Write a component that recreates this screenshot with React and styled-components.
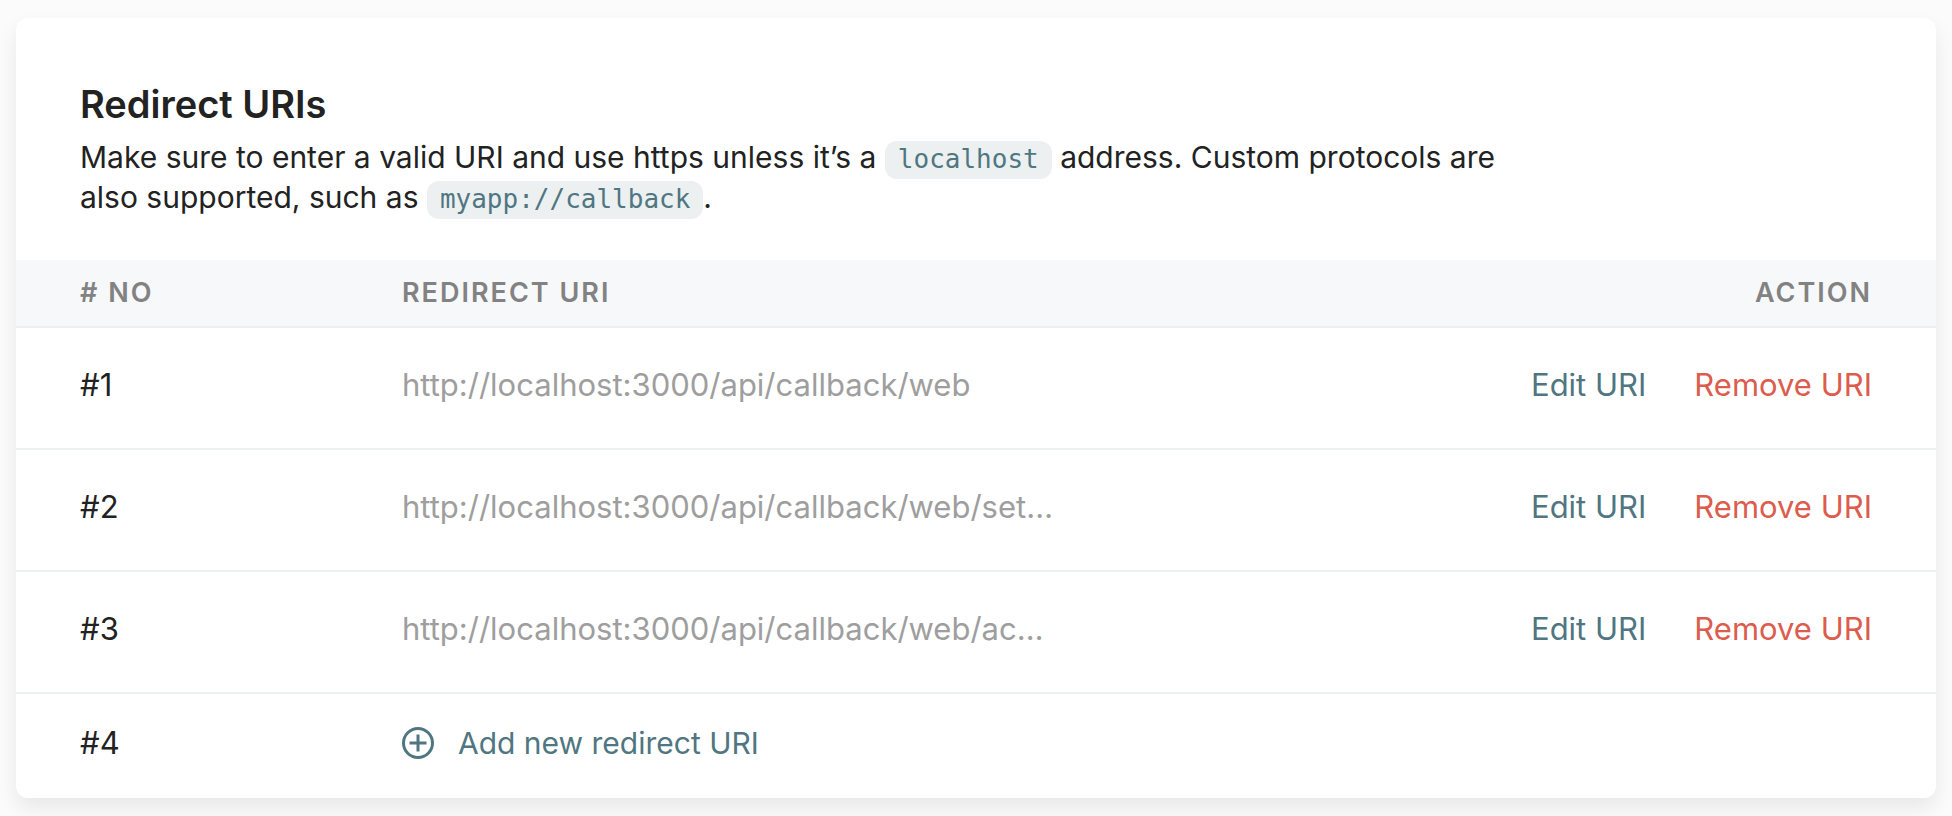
import React from "react";
import styled, { createGlobalStyle } from "styled-components";

const GlobalStyle = createGlobalStyle`
  * { box-sizing: border-box; }
  body {
    margin: 0;
    background: #fbfbfb;
    color: #222222;
    font-family: Inter, "Liberation Sans", sans-serif;
    font-size: 31px;
    line-height: 40px;
  }
`;

const Page = styled.main`
  padding: 18px 16px;
`;

const Card = styled.section`
  overflow: hidden;
  border-radius: 12px;
  background: #ffffff;
  box-shadow: 0 10px 20px rgba(0, 0, 0, 0.08);
`;

const Intro = styled.header`
  padding: 61px 64px 43px;
`;

const Title = styled.h2`
  margin: 0;
  padding-bottom: 8px;
  font-size: 38px;
  font-weight: 600;
  line-height: 50px;
`;

const Description = styled.p`
  margin: 0;
  max-width: 1460px;
  font-size: 30px;
`;

const Code = styled.code`
  padding: 3px 13px 5px;
  border-radius: 12px;
  background: #ecf0f1;
  color: #4f7681;
  font-family: "DejaVu Sans Mono", monospace;
  font-size: 26px;
  line-height: 1;
`;

const Table = styled.table`
  width: 100%;
  border-collapse: separate;
  border-spacing: 0;
  table-layout: fixed;
`;

const HeadCell = styled.th`
  width: ${(p) => p.$width || "auto"};
  padding: 13px 0;
  padding-left: ${(p) => (p.$first ? "64px" : "0")};
  padding-right: ${(p) => (p.$last ? "64px" : "0")};
  border-bottom: 2px solid #ecf0f1;
  background: #f7f8fa;
  color: #828282;
  font-size: 27px;
  font-weight: 600;
  letter-spacing: 2px;
  text-align: ${(p) => (p.$last ? "right" : "left")};
  text-transform: uppercase;
`;

const Row = styled.tr`
  &:not(:last-child) > td {
    padding-top: 37px;
    padding-bottom: 43px;
    border-bottom: 2px solid #ecf0f1;
  }
`;

const Cell = styled.td`
  padding: 29px 0 35px;
  white-space: nowrap;
`;

const NumberCell = styled(Cell)`
  padding-left: 64px;
`;

const UriCell = styled(Cell)`
  color: #9e9e9e;
`;

const ActionCell = styled(Cell)`
  padding-right: 64px;
`;

const Actions = styled.div`
  display: flex;
  justify-content: flex-end;
  gap: 48px;
`;

const TextButton = styled.button`
  display: inline-flex;
  align-items: center;
  gap: 24px;
  padding: 0;
  border: 0;
  background: none;
  color: ${(p) => (p.$danger ? "#dc5c4e" : "#4f7681")};
  font: inherit;
  cursor: pointer;
`;

const AddButton = styled(TextButton)`
  display: flex;
  font-size: 30px;
`;

const PlusIcon = () => (
  <svg width="32" height="32" viewBox="0 0 32 32" fill="none" stroke="currentColor" strokeWidth="3" aria-hidden="true">
    <circle cx="16" cy="16" r="14.5" />
    <path d="M16 7.5v17M7.5 16h17" />
  </svg>
);

const uris = [
  "http://localhost:3000/api/callback/web",
  "http://localhost:3000/api/callback/web/set…",
  "http://localhost:3000/api/callback/web/ac…",
];

export default function App() {
  return (
    <>
      <GlobalStyle />
      <Page>
        <Card>
          <Intro>
            <Title>Redirect URIs</Title>
            <Description>
              Make sure to enter a valid URI and use https unless it’s a <Code>localhost</Code> address. Custom
              protocols are also supported, such as <Code>myapp://callback</Code>.
            </Description>
          </Intro>
          <Table>
            <thead>
              <tr>
                <HeadCell $first $width="386px"># No</HeadCell>
                <HeadCell>Redirect URI</HeadCell>
                <HeadCell $last $width="480px">Action</HeadCell>
              </tr>
            </thead>
            <tbody>
              {uris.map((uri, i) => (
                <Row key={uri}>
                  <NumberCell>#{i + 1}</NumberCell>
                  <UriCell>{uri}</UriCell>
                  <ActionCell>
                    <Actions>
                      <TextButton type="button">Edit URI</TextButton>
                      <TextButton type="button" $danger>
                        Remove URI
                      </TextButton>
                    </Actions>
                  </ActionCell>
                </Row>
              ))}
              <Row>
                <NumberCell>#{uris.length + 1}</NumberCell>
                <UriCell colSpan={2}>
                  <AddButton type="button">
                    <PlusIcon />
                    Add new redirect URI
                  </AddButton>
                </UriCell>
              </Row>
            </tbody>
          </Table>
        </Card>
      </Page>
    </>
  );
}
